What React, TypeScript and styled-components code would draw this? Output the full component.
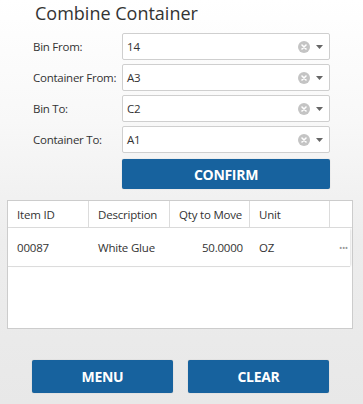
import React from 'react';
import styled, { createGlobalStyle } from 'styled-components';

const GlobalStyle = createGlobalStyle`
  html, body {
    margin: 0;
    padding: 0;
  }
  body {
    font-family: 'Open Sans', 'Noto Sans', sans-serif;
    color: #333;
  }
`;

const Page = styled.div`
  width: 363px;
  height: 404px;
  box-sizing: border-box;
  background: linear-gradient(180deg, #ffffff 0%, #f8f8f8 30%, #ededed 60%, #e8e8e8 100%);
  display: flex;
  flex-direction: column;
  overflow: hidden;
`;

const Title = styled.h1`
  margin: 0;
  padding: 1px 0 0 35px;
  height: 33px;
  box-sizing: border-box;
  font-size: 18px;
  font-weight: 400;
  color: #333;
`;

const Form = styled.div`
  display: grid;
  grid-template-columns: 89px 208px;
  grid-template-rows: repeat(4, 27px) 32px;
  row-gap: 4px;
  padding-left: 33px;
  align-items: center;
`;

const Label = styled.label`
  font-size: 11.5px;
  letter-spacing: -0.25px;
  color: #333;
  white-space: nowrap;
`;

const Field = styled.div`
  height: 27px;
  box-sizing: border-box;
  border: 1px solid #cfcfcf;
  border-radius: 2px;
  background: #fff;
  display: flex;
  align-items: center;
  padding: 0 6px 0 4px;
  font-size: 11.5px;
  letter-spacing: -0.2px;
  color: #333;
`;

const FieldValue = styled.span`
  flex: 1;
`;

const ClearIcon = styled.svg`
  width: 12px;
  height: 12px;
  margin-right: 6px;
`;

const Caret = styled.svg`
  width: 7px;
  height: 4px;
`;

const PrimaryButton = styled.button<{ $width?: number; $height?: number }>`
  width: ${p => (p.$width ? `${p.$width}px` : '100%')};
  height: ${p => p.$height ?? 30}px;
  border: none;
  border-radius: 2px;
  background: #17629e;
  color: #fff;
  font-family: 'Open Sans', 'Noto Sans', sans-serif;
  font-weight: 700;
  font-size: 14px;
  letter-spacing: -0.3px;
  padding: 0;
  box-shadow: 0 0 1px rgba(0, 0, 0, 0.3);
`;

const ConfirmCell = styled.div`
  grid-column: 2;
  align-self: end;
  height: 30px;
`;

const Table = styled.div`
  margin: 11px 0 0 7px;
  width: 346px;
  height: 129px;
  box-sizing: border-box;
  border: 1px solid #cccccc;
  background: #fff;
  display: flex;
  flex-direction: column;
`;

const Row = styled.div<{ $header?: boolean }>`
  display: grid;
  grid-template-columns: 81px 81px 80px 80px 1fr;
  height: ${p => (p.$header ? '26px' : '38px')};
  border-bottom: 1px solid #dcdcdc;
  box-shadow: ${p => (p.$header ? 'none' : '2px 0 2px -1px rgba(0,0,0,0.12)')};
  margin-right: ${p => (p.$header ? '0' : '2px')};
`;

const Cell = styled.div<{ $right?: boolean; $header?: boolean; $last?: boolean }>`
  display: flex;
  align-items: center;
  justify-content: ${p => (p.$right ? 'flex-end' : 'flex-start')};
  padding: ${p => (p.$right ? '0 7px 0 0' : '0 0 0 9px')};
  font-size: 11.5px;
  letter-spacing: -0.2px;
  color: #333;
  white-space: nowrap;
  border-right: ${p => (p.$header && !p.$last ? '1px solid #dcdcdc' : 'none')};
  box-sizing: border-box;
`;

const More = styled.span`
  margin-left: auto;
  margin-right: 5px;
  color: #999;
  font-size: 9px;
  letter-spacing: -0.5px;
`;

const Footer = styled.div`
  display: flex;
  gap: 15px;
  padding-left: 32px;
  margin-top: 31px;
`;

const fields = [
  { label: 'Bin From:', value: '14' },
  { label: 'Container From:', value: 'A3' },
  { label: 'Bin To:', value: 'C2' },
  { label: 'Container To:', value: 'A1' },
];

function Select({ value }: { value: string }) {
  return (
    <Field>
      <FieldValue>{value}</FieldValue>
      <ClearIcon viewBox="0 0 12 12">
        <circle cx="6" cy="6" r="6" fill="#c4c4c4" />
        <path d="M4 4 L8 8 M8 4 L4 8" stroke="#fff" strokeWidth="1.6" strokeLinecap="round" />
      </ClearIcon>
      <Caret viewBox="0 0 7 4">
        <path d="M0 0 H7 L3.5 4 Z" fill="#666" />
      </Caret>
    </Field>
  );
}

export default function App() {
  return (
    <Page>
      <GlobalStyle />
      <Title>Combine Container</Title>
      <Form>
        {fields.map(f => (
          <React.Fragment key={f.label}>
            <Label>{f.label}</Label>
            <Select value={f.value} />
          </React.Fragment>
        ))}
        <ConfirmCell>
          <PrimaryButton>CONFIRM</PrimaryButton>
        </ConfirmCell>
      </Form>
      <Table>
        <Row $header>
          <Cell $header>Item ID</Cell>
          <Cell $header>Description</Cell>
          <Cell $header>Qty to Move</Cell>
          <Cell $header>Unit</Cell>
          <Cell $header $last />
        </Row>
        <Row>
          <Cell>00087</Cell>
          <Cell>White Glue</Cell>
          <Cell $right>50.0000</Cell>
          <Cell>OZ</Cell>
          <Cell>
            <More>•••</More>
          </Cell>
        </Row>
      </Table>
      <Footer>
        <PrimaryButton $width={141} $height={33}>MENU</PrimaryButton>
        <PrimaryButton $width={141} $height={33}>CLEAR</PrimaryButton>
      </Footer>
    </Page>
  );
}
